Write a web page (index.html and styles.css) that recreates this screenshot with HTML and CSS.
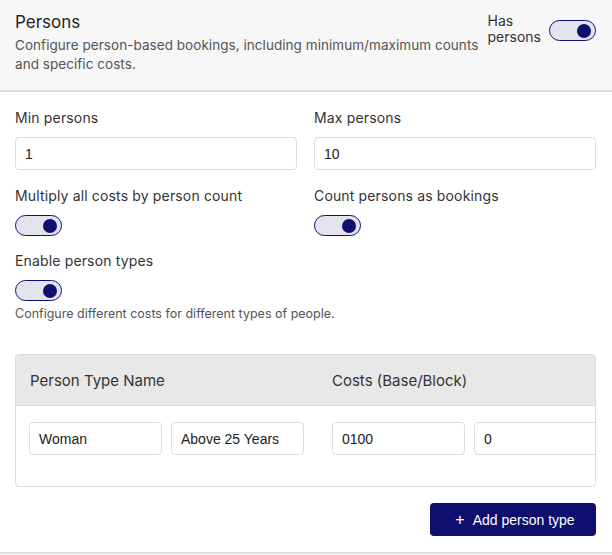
FILE: index.html
```html
<!DOCTYPE html>
<html>
<head>
<meta charset="utf-8">
<link rel="stylesheet" href="styles.css">
</head>
<body>
<div class="card">
  <div class="head">
    <div class="head-text">
      <div class="title">Persons</div>
      <div class="desc">Configure person-based bookings, including minimum/maximum counts and specific costs.</div>
    </div>
    <div class="head-toggle">
      <span class="head-label">Has<br>persons</span>
      <span class="toggle"><span class="knob"></span></span>
    </div>
  </div>
  <div class="body">
    <div class="grid">
      <div class="field">
        <div class="label">Min persons</div>
        <div class="input">1</div>
      </div>
      <div class="field">
        <div class="label">Max persons</div>
        <div class="input">10</div>
      </div>
      <div class="field">
        <div class="label">Multiply all costs by person count</div>
        <span class="toggle"><span class="knob"></span></span>
      </div>
      <div class="field">
        <div class="label">Count persons as bookings</div>
        <span class="toggle"><span class="knob"></span></span>
      </div>
    </div>
    <div class="field single">
      <div class="label">Enable person types</div>
      <span class="toggle"><span class="knob"></span></span>
      <div class="hint">Configure different costs for different types of people.</div>
    </div>
    <div class="table">
      <div class="trow thead">
        <div class="cell c1">Person Type Name</div>
        <div class="cell c2">Costs (Base/Block)</div>
      </div>
      <div class="trow tbody">
        <div class="cell c1">
          <div class="input small">Woman</div>
          <div class="input small">Above 25 Years</div>
        </div>
        <div class="cell c2">
          <div class="input small">0100</div>
          <div class="input small">0</div>
        </div>
      </div>
    </div>
    <div class="actions">
      <button class="btn"><span class="plus">+</span>Add person type</button>
    </div>
  </div>
</div>
</body>
</html>
```

FILE: styles.css
```css
* { box-sizing: border-box; }
html, body { margin: 0; padding: 0; background: #fff; }
body { font-family: Inter, "Noto Sans", sans-serif; color: #333; width: 612px; }

.card { border-bottom: 2px solid #dddddd; }

.head {
  background: #f7f7f7;
  border-bottom: 2px solid #dcdcdc;
  display: flex;
  justify-content: space-between;
  padding: 11px 16px 0 15px;
  height: 92px;
}
.title { font-size: 17px; line-height: 22px; color: #222; }
.desc { font-size: 13.5px; line-height: 19px; color: #555; margin-top: 3px; width: 470px; letter-spacing: 0.05px; }
.head-toggle { display: flex; align-items: flex-start; gap: 8px; padding-top: 2px; }
.head-label { font-size: 14px; line-height: 16px; color: #333; }
.head-toggle .toggle { margin-top: 7px; }

.toggle {
  display: inline-flex;
  align-items: center;
  justify-content: flex-end;
  width: 47px;
  height: 21px;
  border: 1.5px solid #0f1070;
  border-radius: 11px;
  background: #e4e4ef;
  padding-right: 4px;
}
.knob { width: 14px; height: 14px; border-radius: 50%; background: #0f1070; }

.body { padding: 16px 16px 16px 15px; }
.grid { display: grid; grid-template-columns: 282px 282px; column-gap: 17px; row-gap: 16px; }
.field { display: flex; flex-direction: column; align-items: flex-start; }
.label { font-size: 14px; line-height: 20px; color: #333; margin-bottom: 9px; letter-spacing: 0.15px; }
.single { margin-top: 15px; }
.hint { font-size: 12.5px; line-height: 16px; color: #555; margin-top: 5px; }

.input {
  width: 100%;
  height: 33px;
  border: 1px solid #dddddd;
  border-radius: 4px;
  font-family: "Liberation Sans", Arial, sans-serif;
  font-size: 14px;
  color: #222;
  display: flex;
  align-items: center;
  padding-left: 9px;
  background: #fff;
}

.table {
  margin-top: 32px;
  border: 1px solid #dddddd;
  border-radius: 4px;
  overflow: hidden;
  width: 581px;
}
.trow { display: flex; }
.thead { background: #e8e8e8; border-bottom: 1px solid #dddddd; height: 51px; align-items: center; }
.thead .cell { font-size: 15px; color: #333; }
.cell { flex: 0 0 auto; }
.c1 { width: 316px; padding-left: 13px; }
.c2 { width: 302px; }
.thead .c1 { padding-left: 14px; }
.tbody { padding: 16px 0 31px; }
.tbody .cell { display: flex; gap: 9px; }
.input.small { width: 133px; flex: 0 0 133px; }

.actions { display: flex; justify-content: flex-end; margin-top: 16px; }
.btn {
  background: #0e0e6e;
  color: #fff;
  border: none;
  border-radius: 4px;
  height: 33px;
  width: 166px;
  font-family: "Liberation Sans", Arial, sans-serif;
  font-size: 14px;
  display: flex;
  align-items: center;
  justify-content: center;
  padding: 0 0 0 4px;
}
.plus { font-size: 16px; margin-right: 8px; }
```
